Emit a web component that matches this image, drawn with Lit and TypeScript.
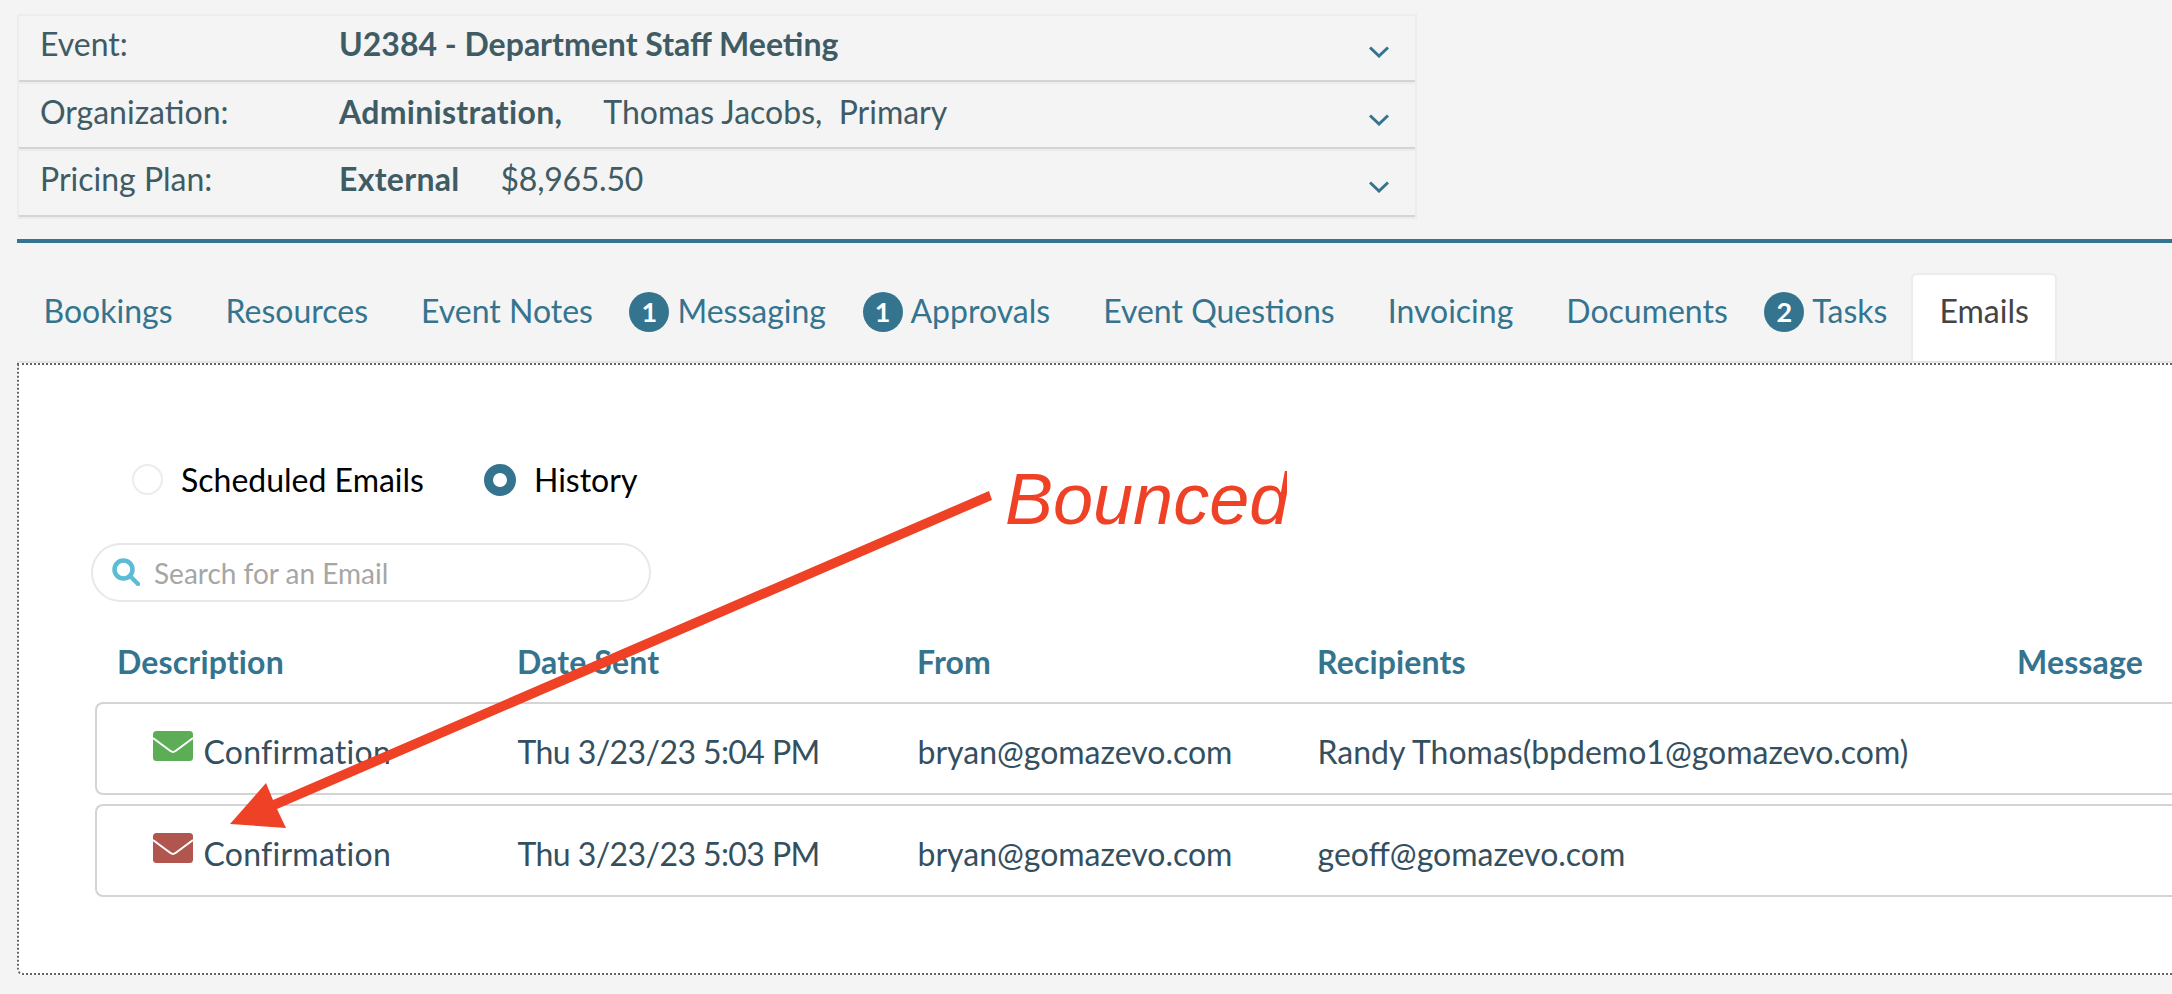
import { LitElement, html, css } from "lit";
import { customElement } from "lit/decorators.js";

const chevron = html`<svg class="chev" width="20" height="12" viewBox="0 0 20 12"><path d="M1 1.5 L10 10 L19 1.5" fill="none" stroke="#35748f" stroke-width="3"/></svg>`;

const envelope = (color: string) => html`<svg class="env" width="40" height="30" viewBox="0 0 40 30">
  <rect width="40" height="30" rx="3.5" fill="${color}"/>
  <path d="M0 7 L17.5 20 Q20 21.8 22.5 20 L40 7" fill="none" stroke="#fff" stroke-width="2"/>
</svg>`;

@customElement("app-root")
export class AppRoot extends LitElement {
  static styles = css`
    :host {
      display: block;
      width: 2172px;
      height: 994px;
      overflow: hidden;
      background: #f4f4f4;
      font-family: Lato, "Liberation Sans", sans-serif;
      font-size: 32px;
      position: relative;
    }
    .page { padding: 14px 0 0 17px; }
    .accordion {
      width: 1400px;
      box-sizing: border-box;
      border: 2px solid #ececec;
      display: flex;
      flex-direction: column;
      gap: 2px;
      background: #ececec;
    }
    .acc-row {
      height: 65.5px;
      box-sizing: border-box;
      background: #f4f4f4;
      border-bottom: 2px solid #d4d4d4;
      display: flex;
      padding: 0 26px 0 21px;
      color: #3f5b64;
      position: relative;
    }
    .acc-label { width: 299px; padding-top: 8px; line-height: 40px; }
    .acc-val { flex: 1; display: flex; padding-top: 8px; line-height: 40px; }
    .acc-val b { font-weight: 700; }
    .acc-val b.wide { letter-spacing: 0.3px; }
    .sep { width: 41px; }
    .money { letter-spacing: -0.25px; }
    .chev { align-self: flex-start; margin-top: 30px; }
    .rule { height: 4px; background: #35748f; margin-top: 20px; }
    .tabs {
      display: flex;
      height: 120px;
      box-sizing: border-box;
      border-bottom: 2px solid #e4e4e4;
      align-items: flex-end;
    }
    .tab {
      height: 88px;
      box-sizing: border-box;
      padding: 14px 26.5px 0;
      line-height: 48px;
      color: #35748f;
      display: flex;
      white-space: nowrap;
    }
    .tab.b { padding-left: 10px; }
    .badge {
      width: 40px;
      height: 40px;
      margin: 5px 8px 0 0;
      border-radius: 50%;
      background: #35748f;
      color: #fff;
      font-size: 27px;
      font-weight: 700;
      line-height: 40px;
      text-align: center;
    }
    .tab.active {
      background: #fff;
      color: #444;
      border: 2px solid #ececec;
      border-bottom: 0;
      border-radius: 6px 6px 0 0;
      margin-left: -2.5px;
      padding: 12px 26px 0;
    }
    .panel {
      height: 612px;
      box-sizing: border-box;
      background: #fff;
      border: 2px dotted #666;
      border-right: 0;
      border-radius: 0 0 0 6px;
      padding: 98px 0 0 0;
    }
    .radios { display: flex; align-items: center; height: 34px; padding-left: 113px; color: #000; }
    .radio {
      width: 31px;
      height: 31px;
      box-sizing: border-box;
      border: 2px solid #ececec;
      border-radius: 50%;
      margin-right: 18px;
    }
    .radio.on { width: 32px; height: 32px; border: 9px solid #35748f; margin-left: 60px; margin-right: 18px; }
    .search {
      margin: 46px 0 0 72px;
      width: 560px;
      height: 59px;
      box-sizing: border-box;
      border: 2px solid #e8e8e8;
      border-radius: 30px;
      display: flex;
      align-items: center;
      padding-left: 19px;
      color: #a6a6a6;
      font-size: 28px;
    }
    .search span { padding-top: 2px; }
    .search svg { margin-right: 14px; }
    .cols {
      display: grid;
      grid-template-columns: 399px 400px 400px 700px 1fr;
    }
    .head {
      margin-top: 40px;
      height: 60px;
      padding-left: 98px;
      grid-template-columns: 400px 400px 400px 700px 1fr;
      line-height: 40px;
      color: #35748f;
      font-weight: 700;
      letter-spacing: 0.15px;
    }
    .row {
      height: 93px;
      box-sizing: border-box;
      margin: 0 0 9px 76px;
      padding: 6px 0 0 21.5px;
      border: 2px solid #d4d4d4;
      border-right: 0;
      border-radius: 8px 0 0 8px;
      align-items: center;
      color: #34505f;
    }
    .desc { display: flex; align-items: flex-start; padding-left: 34px; }
    .env { margin: 0 11px 0 0; flex: none; }
    .desc span { line-height: 40px; margin-top: 1px; letter-spacing: 0.25px; }
    .date { letter-spacing: -0.58px; }
    .overlay {
      position: absolute;
      left: 0;
      top: 0;
      pointer-events: none;
    }
    .bounced {
      position: absolute;
      left: 1005px;
      top: 457px;
      width: 282px;
      overflow: hidden;
      color: #ef4126;
      font: italic 400 72px/84px "Liberation Sans", Arial, sans-serif;
      white-space: nowrap;
    }
  `;

  private tab(label: string, badge?: string) {
    return badge
      ? html`<div class="tab b"><span class="badge">${badge}</span>${label}</div>`
      : html`<div class="tab">${label}</div>`;
  }

  private row(icon: string, date: string, rec: string) {
    return html`<div class="row cols">
      <div class="desc">${envelope(icon)}<span>Confirmation</span></div>
      <div class="date">${date}</div>
      <div>bryan@gomazevo.com</div>
      <div>${rec}</div>
      <div></div>
    </div>`;
  }

  render() {
    return html`
      <div class="page">
        <div class="accordion">
          <div class="acc-row">
            <div class="acc-label">Event:</div>
            <div class="acc-val"><b>U2384 - Department Staff Meeting</b></div>
            ${chevron}
          </div>
          <div class="acc-row">
            <div class="acc-label">Organization:</div>
            <div class="acc-val"><b class="wide">Administration,</b><span class="sep"></span>Thomas Jacobs,&nbsp; Primary</div>
            ${chevron}
          </div>
          <div class="acc-row">
            <div class="acc-label">Pricing Plan:</div>
            <div class="acc-val"><b class="wide">External</b><span class="sep"></span><span class="money">$8,965.50</span></div>
            ${chevron}
          </div>
        </div>
        <div class="rule"></div>
        <div class="tabs">
          ${this.tab("Bookings")}
          ${this.tab("Resources")}
          ${this.tab("Event Notes")}
          ${this.tab("Messaging", "1")}
          ${this.tab("Approvals", "1")}
          ${this.tab("Event Questions")}
          ${this.tab("Invoicing")}
          ${this.tab("Documents")}
          ${this.tab("Tasks", "2")}
          <div class="tab active">Emails</div>
        </div>
        <div class="panel">
          <div class="radios">
            <div class="radio"></div>Scheduled Emails
            <div class="radio on"></div>History
          </div>
          <div class="search">
            <svg width="28" height="28" viewBox="0 0 28 28"><circle cx="11.5" cy="11.5" r="9" fill="none" stroke="#5bbcd6" stroke-width="4.5"/><path d="M18 18 L26 26" stroke="#5bbcd6" stroke-width="4.5" stroke-linecap="round"/></svg>
            <span>Search for an Email</span>
          </div>
          <div class="head cols">
            <div>Description</div><div>Date Sent</div><div>From</div><div>Recipients</div><div>Message</div>
          </div>
          ${this.row("#5cad56", "Thu 3/23/23 5:04 PM", "Randy Thomas(bpdemo1@gomazevo.com)")}
          ${this.row("#b0564f", "Thu 3/23/23 5:03 PM", "geoff@gomazevo.com")}
        </div>
      </div>
      <svg class="overlay" width="2172" height="994" viewBox="0 0 2172 994">
        <path d="M989 491 L992 500 L277 809 L286 828 L230 824 L266 783 L273 800 Z" fill="#ef4126"/>
      </svg>
      <div class="bounced">Bounced</div>
    `;
  }
}
